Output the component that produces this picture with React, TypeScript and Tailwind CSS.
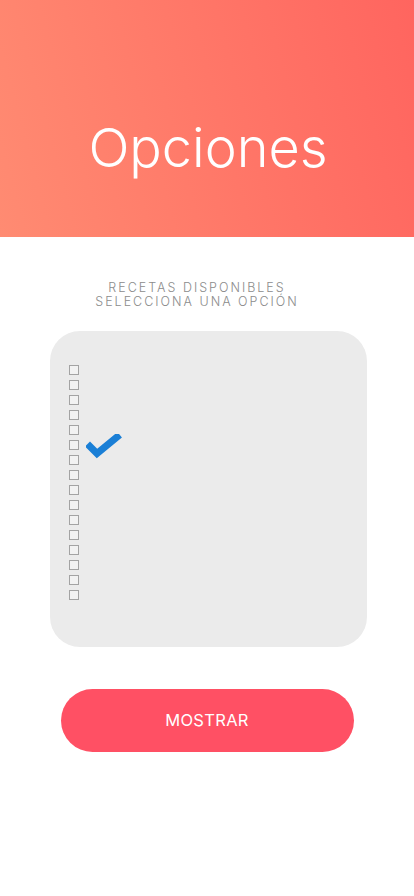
import React from "react";

export default function App() {
  const boxes = Array.from({ length: 16 }, (_, i) => i);
  return (
    <div className="w-[414px] h-[896px] bg-white flex flex-col items-center" style={{ fontFamily: "Inter, 'Open Sans', sans-serif" }}>
      <div className="w-full h-[237px] bg-linear-[75deg] from-[#ff8b72] to-[#ff655f] flex justify-center pt-[116px]">
        <h1 className="text-white font-light text-[54px] leading-[64px] ml-[2px]">Opciones</h1>
      </div>
      <div className="mt-[44px] mr-[20px] flex flex-col items-center text-[#8c8c8c] font-light text-[12.5px] leading-[14px] tracking-[2px]">
        <span>RECETAS DISPONIBLES</span>
        <span>SELECCIONA UNA OPCIÓN</span>
      </div>
      <div className="mt-[22px] ml-[2px] w-[317px] h-[316px] bg-[#ebebeb] rounded-[30px] pl-[19px] pt-[34px] flex flex-col gap-[5px]">
        {boxes.map((i) => (
          <div key={i} className="relative h-[10px] flex items-center">
            <div className="w-[10px] h-[10px] border border-[#a3a3a3] bg-[#f2f2f2]" />
            {i === 5 && (
              <svg className="absolute left-[17px] top-[-6px]" width="36" height="28" viewBox="0 0 36 28">
                <path d="M4 12.5 L11 19.5 L31 3" fill="none" stroke="#1a7fd6" strokeWidth="7" strokeLinecap="square" strokeLinejoin="miter" />
              </svg>
            )}
          </div>
        ))}
      </div>
      <button className="mt-[42px] w-[293px] h-[63px] rounded-full bg-[#ff5064] text-white text-[16.5px] font-normal tracking-[0.3px]">
        MOSTRAR
      </button>
    </div>
  );
}
